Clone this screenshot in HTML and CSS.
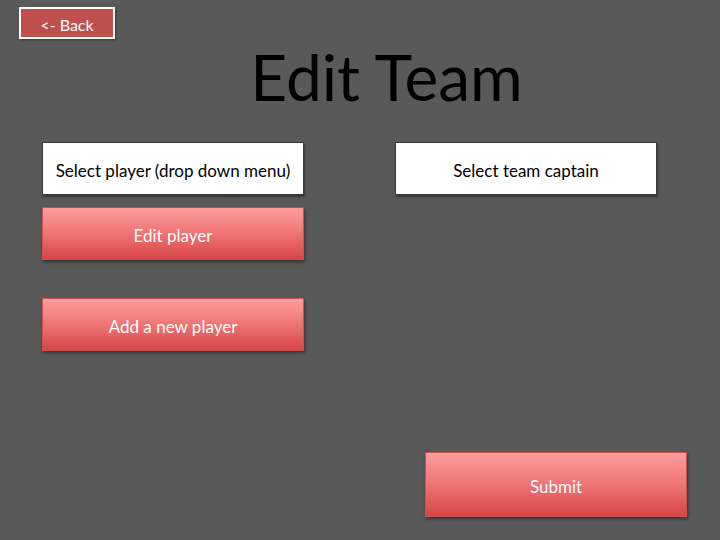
FILE: index.html
```html
<!DOCTYPE html>
<html>
<head>
<meta charset="utf-8">
<link rel="stylesheet" href="styles.css">
</head>
<body>
<div class="page">
  <div class="topbar">
    <button class="back">&lt;- Back</button>
  </div>
  <h1 class="title">Edit Team</h1>
  <div class="columns">
    <div class="col">
      <div class="field">Select player (drop down menu)</div>
      <button class="btn edit">Edit player</button>
      <button class="btn add">Add a new player</button>
    </div>
    <div class="col right">
      <div class="field">Select team captain</div>
      <button class="btn submit">Submit</button>
    </div>
  </div>
</div>
</body>
</html>
```
FILE: styles.css
```css
html, body {
  margin: 0;
  padding: 0;
  background: #595959;
  width: 720px;
  height: 540px;
  overflow: hidden;
  font-family: Lato, "Open Sans", sans-serif;
}
.page {
  display: flex;
  flex-direction: column;
  padding: 7px 0 0 19px;
}
.topbar {
  display: flex;
}
.back {
  width: 96px;
  height: 32px;
  box-sizing: border-box;
  border: 2px solid #ffffff;
  background: #c0504d;
  color: #ffffff;
  font-family: inherit;
  font-size: 16px;
  padding: 2px 0 0 0;
  box-shadow: 1px 1px 2px rgba(0,0,0,0.35);
}
.title {
  margin: 0;
  padding-left: 34px;
  text-align: center;
  font-weight: normal;
  font-size: 64px;
  line-height: 76px;
  color: #000000;
}
.columns {
  display: flex;
  gap: 91px;
  margin-top: 27px;
  padding-left: 23px;
}
.col {
  display: flex;
  flex-direction: column;
  width: 262px;
  flex: none;
}
.field {
  height: 53px;
  box-sizing: border-box;
  background: #ffffff;
  border: 1px solid #3a3a3a;
  display: flex;
  align-items: center;
  justify-content: center;
  padding-top: 3px;
  font-size: 17px;
  color: #000000;
  box-shadow: 1px 2px 2px rgba(0,0,0,0.4);
}
.btn {
  width: 262px;
  height: 53px;
  flex: none;
  box-sizing: border-box;
  border: 1px solid #c95252;
  background: linear-gradient(to bottom, #ff9c9c 0%, #ef7474 50%, #d84545 100%);
  color: #ffffff;
  font-family: inherit;
  font-size: 17px;
  padding: 3px 0 0 0;
  box-shadow: 1px 2px 3px rgba(0,0,0,0.45);
}
.edit {
  margin-top: 12px;
}
.add {
  margin-top: 38px;
}
.submit {
  margin-top: 257px;
  margin-left: 30px;
  height: 65px;
}
```
